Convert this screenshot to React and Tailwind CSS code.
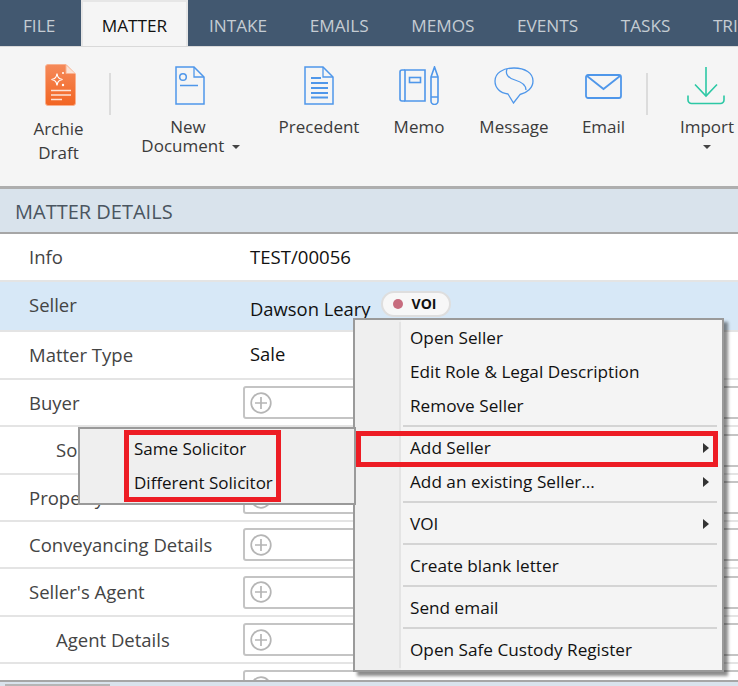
const FONT = "font-['Open_Sans','Noto_Sans',sans-serif]";

function ArchieIcon() {
  return (
    <svg width="32" height="44" viewBox="0 0 32 44" fill="none">
      <defs>
        <linearGradient id="ag" x1="0" y1="0" x2="0" y2="1">
          <stop offset="0" stopColor="#f58a5a" />
          <stop offset="1" stopColor="#f26522" />
        </linearGradient>
      </defs>
      <path d="M3 1.5H21L30.500 11V40a2.500 2.500 0 0 1-2.500 2.500H3A2.500 2.500 0 0 1 .5 40V4A2.500 2.500 0 0 1 3 1.500Z" fill="url(#ag)" stroke="#f9b08e" />
      <path d="M21 2V10.500H30" fill="#fbe3d6" stroke="#f9b08e" />
      <path d="M12 10.500C12.600 14.500 13.500 15.500 17.500 16.500C13.500 17.500 12.600 18.500 12 22.500C11.400 18.500 10.500 17.500 6.500 16.500C10.500 15.500 11.400 14.500 12 10.500Z" stroke="#fff" strokeWidth="1.200" />
      <circle cx="18" cy="10" r="1" fill="#fff" />
      <circle cx="18" cy="22" r="1.200" fill="#fff" />
      <path d="M6 27.500H26M6 32H26M6 36.500H17" stroke="#fde2d4" strokeWidth="1.300" />
    </svg>
  );
}

function NewDocIcon() {
  return (
    <svg width="30" height="39" viewBox="0 0 30 39" fill="none" stroke="#4f97ea" strokeWidth="1.500">
      <path d="M1 1H19L29 11V38H1Z" />
      <path d="M19 1V11H29" strokeWidth="1.300" />
      <circle cx="8" cy="11" r="3.300" />
      <path d="M5 19.500H23" />
    </svg>
  );
}

function PrecedentIcon() {
  return (
    <svg width="30" height="39" viewBox="0 0 30 39" fill="none" stroke="#4f97ea" strokeWidth="1.500">
      <path d="M1 1H19L29 11V38H1Z" />
      <path d="M19 1V11H29" strokeWidth="1.300" />
      <path d="M7 12H17M7 17H24M7 22H24M7 27H24M7 31.500H24" strokeWidth="1.800" />
    </svg>
  );
}

function MemoIcon() {
  return (
    <svg width="40" height="39" viewBox="0 0 40 39" fill="none" stroke="#4f97ea" strokeWidth="1.600">
      <path d="M6 4H26V35H6Z" />
      <path d="M6 4H3a2 2 0 0 0-2 2V33a2 2 0 0 0 2 2H6" />
      <rect x="10.500" y="11.500" width="11" height="5" />
      <path d="M32 11 35.500 1 39 11V35a3.500 3.500 0 0 1-7 0Z" />
      <path d="M32 11H39M32 31H39" />
    </svg>
  );
}

function MessageIcon() {
  return (
    <svg width="40" height="37" viewBox="0 0 40 37" fill="none" stroke="#4f97ea" strokeWidth="1.300">
      <path d="M14 27C6 26 1 21 1 14C1 6 9 1 20 1C31 1 39 6 39 14C39 21 33 26 26 27.500L19.500 36Z" />
      <path d="M13 2C11 7 14 11 21 13C28 15 32 18 32 23" />
    </svg>
  );
}

function EmailIcon() {
  return (
    <svg width="37" height="25" viewBox="0 0 37 25" fill="none" stroke="#4f97ea" strokeWidth="1.800">
      <rect x="1" y="1" width="35" height="23" rx="2" />
      <path d="M2 2 18.500 15 35 2" />
    </svg>
  );
}

function ImportIcon() {
  return (
    <svg width="38" height="38" viewBox="0 0 38 38" fill="none" stroke="#2cc8a5" strokeWidth="1.600">
      <path d="M19 0V29" />
      <path d="M8 17.500 19 29 30 17.500" />
      <path d="M1 28.500V33a3.500 3.500 0 0 0 3.500 3.500H33.500a3.500 3.500 0 0 0 3.500-3.500V28.500" />
    </svg>
  );
}

const Caret = () => <span className="inline-block w-0 h-0 border-x-[4px] border-x-transparent border-t-[4px] border-t-[#444]" />;

function RibbonItem({ width, icon, children, tight = true }) {
  return (
    <div className={`${width} shrink-0 flex flex-col items-center`}>
      <div className="h-[42px] flex items-end justify-center">{icon}</div>
      <div className={`mt-[10px] text-center text-[17px] text-[#3b3b3b] ${tight ? "leading-[19px]" : "leading-[24px]"}`}>{children}</div>
    </div>
  );
}

function Separator() {
  return <div className="w-[2px] shrink-0 h-[42px] mt-[8px] bg-[#dcdcdc]" />;
}

function Row({ label, indent, value, box, height, active }) {
  return (
    <div className={`flex items-center shrink-0 border-b-2 border-[#e4e4e4] ${height} ${active ? "bg-[#d7e8f7]" : "bg-white"}`}>
      <div className={`w-[250px] shrink-0 text-[18.5px] text-[#444] ${active ? "-mt-[2px]" : ""} ${indent ? "pl-[56px]" : "pl-[29px]"}`}>{label}</div>
      {value}
      {box && (
        <div className="-ml-[7px] flex-1 h-[33px] min-w-[520px] border-2 border-[#c4c4c4] rounded-[3px] flex items-center pl-[5px]">
          <svg width="22" height="22" viewBox="0 0 22 22" fill="none" stroke="#b5b5b5" strokeWidth="1.700">
            <circle cx="11" cy="11" r="9.800" />
            <path d="M11 5V17M5 11H17" />
          </svg>
        </div>
      )}
    </div>
  );
}

function MenuItem({ label, arrow }) {
  return (
    <div className="h-[34px] flex items-center justify-between pl-[9px] pr-[13px] pt-[2px] text-[17.2px] text-[#111]">
      <span>{label}</span>
      {arrow && <span className="w-0 h-0 border-y-[5px] border-y-transparent border-l-[6px] border-l-[#333]" />}
    </div>
  );
}

const MenuSep = () => <div className="h-[2px] my-[3px] ml-[2px] mr-[5px] bg-[#d4d4d4]" />;

export default function App() {
  const tabs = ["INTAKE", "EMAILS", "MEMOS", "EVENTS", "TASKS", "TRIGGERS"];
  return (
    <div className={`relative w-[738px] h-[686px] overflow-hidden bg-white ${FONT}`}>
      <div className="h-[46px] flex bg-[#425870] text-[17.2px] overflow-hidden">
        <div className="w-[81px] shrink-0 pl-[23px] leading-[52px] text-[#c5ccd3]">FILE</div>
        <div className="w-[107px] shrink-0 h-[47px] bg-[#f5f5f5] border-x-2 border-t-2 border-[#e6e6e6] text-center leading-[48px] text-[#111]">MATTER</div>
        <div className="flex pl-[21px] gap-[42.5px]">
          {tabs.map((t) => (
            <div key={t} className="leading-[52px] text-[#c5ccd3]">{t}</div>
          ))}
        </div>
      </div>

      <div className="h-[143px] bg-[#f5f5f5] border-t border-[#d9d9d9] border-b-[3px] border-b-[#aeaeae] pt-[18px] pl-[8px] flex overflow-hidden">
        <RibbonItem width="w-[101px]" icon={<div className="ml-[4px]"><ArchieIcon /></div>} tight={false}>
          <span className="block">Archie<br />Draft</span>
        </RibbonItem>
        <Separator />
        <div className="-mr-[3px]">
          <RibbonItem width="w-[159px]" icon={<div className="mb-[2px] mr-[1px]"><NewDocIcon /></div>}>
            <span className="block pr-[5px]">New</span>
            Document <span className="relative -top-[3px] ml-[3px]"><Caret /></span>
          </RibbonItem>
        </div>
        <RibbonItem width="w-[104px]" icon={<div className="mb-[2px]"><PrecedentIcon /></div>}>Precedent</RibbonItem>
        <RibbonItem width="w-[96px]" icon={<div className="mb-[2px]"><MemoIcon /></div>}>Memo</RibbonItem>
        <RibbonItem width="w-[94px]" icon={<div className="mb-[3px]"><MessageIcon /></div>}>Message</RibbonItem>
        <RibbonItem width="w-[85px]" icon={<div className="mb-[8px]"><EmailIcon /></div>}>Email</RibbonItem>
        <Separator />
        <RibbonItem width="w-[118px]" icon={<div className="mb-[2px] mr-[2px]"><ImportIcon /></div>}>
          Import<br /><span className="relative -top-[3px]"><Caret /></span>
        </RibbonItem>
      </div>

      <div className="h-[45px] flex items-center pl-[15px] pt-[2px] bg-[#d9e3ec] border-b-2 border-[#a6a6a6] text-[20px] text-[#4a5560]">MATTER DETAILS</div>

      <div className="flex flex-col">
        <Row label="Info" height="h-[48px]" value={<span className="text-[18.6px] text-[#111]">TEST/00056</span>} />
        <Row label="Seller" height="h-[50px]" active value={
          <div className="flex items-center">
            <span className="text-[18.4px] text-[#111] pt-[5px]">Dawson Leary</span>
            <span className="ml-[10px] h-[26px] w-[70px] rounded-full bg-[#f7f7f7] border-2 border-[#dedede] flex items-center pl-[10px] gap-[9px] text-[14px] font-bold text-[#111] -mt-[4px]">
              <span className="w-[10px] h-[10px] rounded-full bg-[#c76c7e]" />VOI
            </span>
          </div>
        } />
        <Row label="Matter Type" height="h-[48px]" value={<span className="text-[18.400px] text-[#111] -mt-[2px]">Sale</span>} />
        <Row label="Buyer" height="h-[47px]" box />
        <Row label="Solicitor" indent height="h-[48px]" box />
        <Row label="Property" height="h-[47px]" box />
        <Row label="Conveyancing Details" height="h-[47px]" box />
        <Row label="Seller's Agent" height="h-[48px]" box />
        <Row label="Agent Details" indent height="h-[47px]" box />
        <Row label="Solicitor Details" height="h-[47px]" box />
      </div>

      <div className="absolute left-0 right-0 top-[680px] h-[6px] bg-[#d9e3ec] border-t-2 border-[#a6a6a6]">
        <div className="ml-[5px] w-[105px] h-[2px] mt-[2px] bg-[#b5b5b5]" />
      </div>

      {/* Context menu */}
      <div className="absolute left-[353px] top-[318px] w-[371px] h-[354px] bg-[#f4f4f4] border-2 border-[#9a9a9a] shadow-[4px_4px_3px_rgba(0,0,0,0.45)] flex">
        <div className="w-[46px] shrink-0 bg-[#efefef] flex justify-end pt-[2px] pb-[2px]">
          <div className="w-[2px] bg-[#e4e4e4]" />
        </div>
        <div className="flex-1">
          <MenuItem label="Open Seller" />
          <MenuItem label="Edit Role & Legal Description" />
          <MenuItem label="Remove Seller" />
          <MenuSep />
          <MenuItem label="Add Seller" arrow />
          <MenuItem label="Add an existing Seller..." arrow />
          <MenuSep />
          <MenuItem label="VOI" arrow />
          <MenuSep />
          <MenuItem label="Create blank letter" />
          <MenuSep />
          <MenuItem label="Send email" />
          <MenuSep />
          <MenuItem label="Open Safe Custody Register" />
        </div>
      </div>
      <div className="absolute left-[356px] top-[431px] w-[362px] h-[36px] border-[5px] border-[#ed1c24]" />

      {/* Submenu */}
      <div className="absolute left-[78px] top-[427px] w-[278px] h-[78px] bg-[#efefef] border-2 border-[#9a9a9a] pt-[3px] pl-[54px] text-[17px] text-[#111]">
        <div className="h-[34px] flex items-center">Same Solicitor</div>
        <div className="h-[34px] flex items-center">Different Solicitor</div>
      </div>
      <div className="absolute left-[124px] top-[430px] w-[157px] h-[72px] border-[5px] border-[#ed1c24]" />
    </div>
  );
}
